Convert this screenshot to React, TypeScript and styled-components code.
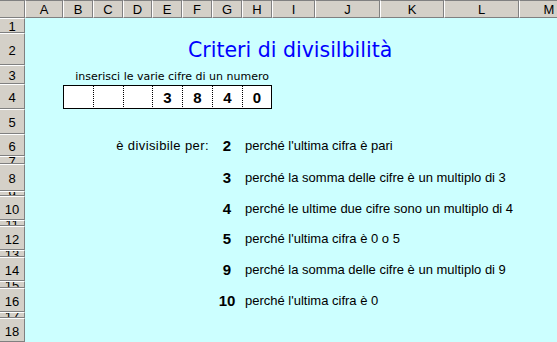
import styled, { createGlobalStyle } from 'styled-components';

const GlobalStyle = createGlobalStyle`
  html, body {
    margin: 0;
    padding: 0;
    background: #ccffff;
  }
  body {
    font-family: 'Liberation Sans', Arial, sans-serif;
  }
`;

const colWidths = [38, 30, 30, 29, 30, 30, 30, 30, 43, 65, 64, 75, 60];
const rowHeights = [15, 32, 19, 25, 25, 22, 8, 27, 5, 24, 6, 24, 7, 24, 7, 24, 6, 24, 20];
const letters = 'ABCDEFGHIJKLM'.split('');

// grid column for a sheet letter (column 1 is the row header)
const col = (letter: string) => letters.indexOf(letter) + 2;

const Sheet = styled.div`
  display: grid;
  grid-template-columns: 25px ${colWidths.map((w) => `${w}px`).join(' ')};
  grid-template-rows: 18px ${rowHeights.map((h) => `${h}px`).join(' ')};
  width: 557px;
  height: 342px;
  overflow: hidden;
  background: #ccffff;
`;

const Corner = styled.div`
  grid-row: 1;
  grid-column: 1;
  box-sizing: border-box;
  background: #d4d0c8;
  border-top: 1px solid #808080;
  border-right: 1px solid #808080;
  border-bottom: 1px solid #808080;
`;

const ColHead = styled.div<{ $col: number }>`
  grid-row: 1;
  grid-column: ${(p) => p.$col};
  box-sizing: border-box;
  display: flex;
  align-items: center;
  justify-content: center;
  background: #d4d0c8;
  border-top: 1px solid #808080;
  border-left: 1px solid #ffffff;
  border-right: 1px solid #808080;
  border-bottom: 1px solid #808080;
  font-size: 13px;
  color: #000;
  overflow: hidden;
`;

const RowHead = styled.div<{ $row: number }>`
  grid-column: 1;
  grid-row: ${(p) => p.$row};
  box-sizing: border-box;
  display: flex;
  align-items: center;
  justify-content: center;
  padding-top: 2px;
  background: #d4d0c8;
  border-top: 1px solid #ffffff;
  border-bottom: 1px solid #808080;
  border-right: 1px solid #808080;
  font-size: 13px;
  line-height: 13px;
  color: #000;
  overflow: hidden;
`;

const Cell = styled.div<{ $row: number; $col: number; $span?: number; $align?: 'left' | 'right' | 'center' }>`
  grid-row: ${(p) => p.$row + 1};
  grid-column: ${(p) => p.$col} / span ${(p) => p.$span ?? 1};
  display: flex;
  align-items: center;
  justify-content: ${(p) => (p.$align === 'right' ? 'flex-end' : p.$align === 'center' ? 'center' : 'flex-start')};
  padding: 0 3px;
  white-space: nowrap;
  min-width: 0;
  font-size: 13px;
  color: #000;
`;

const Title = styled(Cell)`
  font-family: 'DejaVu Sans', sans-serif;
  font-size: 20.5px;
  color: #0000ff;
  padding-left: 6px;
  padding-top: 2px;
`;

const Hint = styled(Cell)`
  font-family: 'DejaVu Sans', sans-serif;
  font-size: 11px;
  align-items: flex-end;
  padding-bottom: 1px;
`;

const Label = styled(Cell)`
  letter-spacing: 0.4px;
`;

const Digit = styled.div<{ $col: number; $first?: boolean; $last?: boolean }>`
  grid-row: 5;
  grid-column: ${(p) => p.$col};
  box-sizing: border-box;
  display: flex;
  align-items: center;
  justify-content: center;
  margin-top: 1px;
  border-top: 1px solid #000;
  border-bottom: 1px solid #000;
  border-left: 1px ${(p) => (p.$first ? 'solid' : 'dotted')} #000;
  border-right: ${(p) => (p.$last ? '1px solid #000' : 'none')};
  font-size: 15px;
  font-weight: bold;
  background: #ffffff;
`;

const Num = styled(Cell)`
  font-size: 15px;
  font-weight: bold;
`;

const reasons: [number, string, string][] = [
  [6, '2', "perché l'ultima cifra è pari"],
  [8, '3', 'perché la somma delle cifre è un multiplo di 3'],
  [10, '4', 'perché le ultime due cifre sono un multiplo di 4'],
  [12, '5', "perché l'ultima cifra è 0 o 5"],
  [14, '9', 'perché la somma delle cifre è un multiplo di 9'],
  [16, '10', "perché l'ultima cifra è 0"],
];

const digits = ['', '', '', '3', '8', '4', '0'];

export default function App() {
  return (
    <>
      <GlobalStyle />
      <Sheet>
        <Corner />
        {letters.map((l) => (
          <ColHead key={l} $col={col(l)}>
            {l}
          </ColHead>
        ))}
        {rowHeights.map((_, i) => (
          <RowHead key={i} $row={i + 2}>
            {i + 1}
          </RowHead>
        ))}

        <Title $row={2} $col={col('F')}>
          Criteri di divisilbilità
        </Title>
        <Hint $row={3} $col={col('B')} $span={7} $align="right">
          inserisci le varie cifre di un numero
        </Hint>

        {digits.map((d, i) => (
          <Digit key={i} $col={col('B') + i} $first={i === 0} $last={i === digits.length - 1}>
            {d}
          </Digit>
        ))}

        <Label $row={6} $col={col('C')} $span={4} $align="right">
          è divisibile per:
        </Label>
        {reasons.map(([row, n, text]) => (
          <>
            <Num key={`n${row}`} $row={row} $col={col('G')} $align="center">
              {n}
            </Num>
            <Cell key={`t${row}`} $row={row} $col={col('H')}>
              {text}
            </Cell>
          </>
        ))}
      </Sheet>
    </>
  );
}
